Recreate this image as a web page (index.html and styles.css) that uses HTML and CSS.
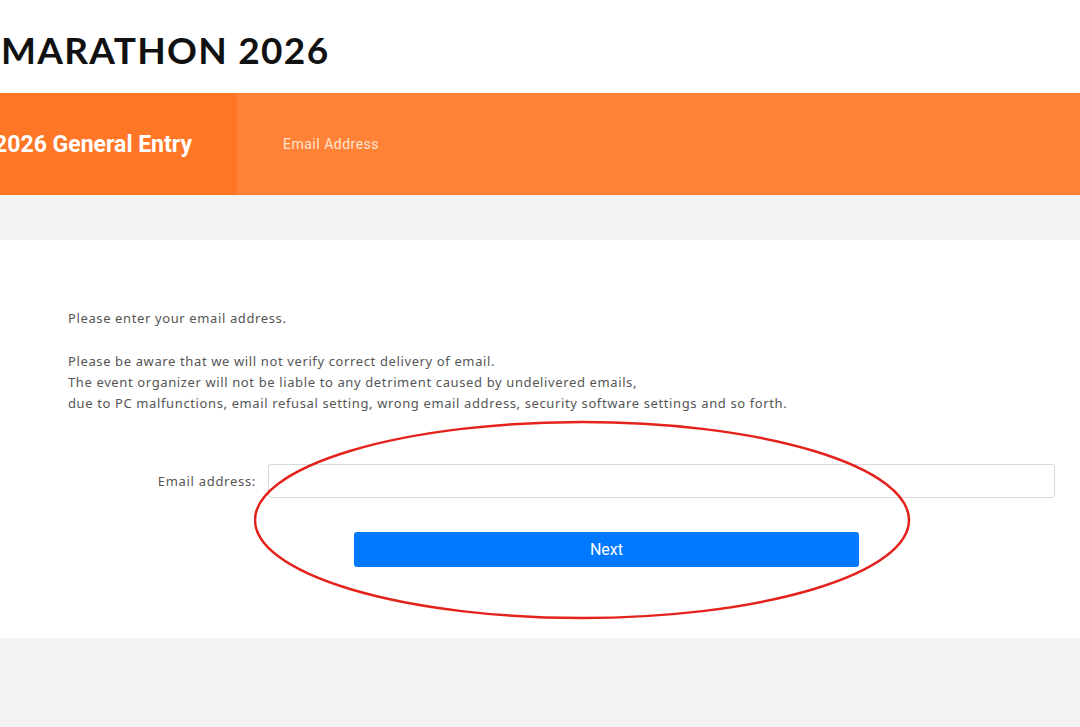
FILE: index.html
```html
<!DOCTYPE html>
<html lang="en">
<head>
<meta charset="utf-8">
<title>MARATHON 2026 - Email Address</title>
<link rel="stylesheet" href="styles.css">
</head>
<body>
<header class="site-header">
  <div class="logo">MARATHON 2026</div>
</header>
<nav class="entry-bar">
  <div class="entry-title">2026 General Entry</div>
  <div class="entry-step">Email Address</div>
</nav>
<div class="gap-band"></div>
<main class="content">
  <div class="notes">
    <p class="note">Please enter your email address.</p>
    <p class="note">Please be aware that we will not verify correct delivery of email.<br>The event organizer will not be liable to any detriment caused by undelivered emails,<br>due to PC malfunctions, email refusal setting, wrong email address, security software settings and so forth.</p>
  </div>
  <form class="form">
    <div class="form-row">
      <label class="form-label" for="email">Email address:</label>
      <input class="form-input" id="email" type="email">
    </div>
    <div class="btn-row">
      <button class="btn-next" type="button">Next</button>
    </div>
  </form>
  <svg class="annotation" width="680" height="210" viewBox="0 0 680 210">
    <ellipse cx="328" cy="100" rx="327" ry="98" fill="none" stroke="#e3231b" stroke-width="2.5"/>
  </svg>
</main>
<footer class="foot-band"></footer>
</body>
</html>
```
FILE: styles.css
```css
* { box-sizing: border-box; }
html, body { margin: 0; padding: 0; }
body {
  width: 1080px;
  height: 727px;
  overflow: hidden;
  background: #f3f3f3;
  font-family: "Noto Sans", "Noto Sans CJK JP", sans-serif;
}
.site-header {
  height: 93px;
  background: #fff;
  display: flex;
  align-items: center;
}
.logo {
  font-family: "Lato", "DejaVu Sans", sans-serif;
  font-weight: 700;
  font-size: 37px;
  letter-spacing: 1.3px;
  color: #111;
  margin-left: 1px;
  padding-top: 5px;
}
.entry-bar {
  height: 102px;
  display: flex;
  background: #ff8236;
}
.entry-title {
  width: 237px;
  flex-shrink: 0;
  background: #ff7626;
  color: #fff;
  font-family: "Roboto", "Liberation Sans", sans-serif;
  font-weight: 700;
  font-size: 23px;
  display: flex;
  align-items: center;
  justify-content: flex-end;
  padding-right: 45px;
  white-space: nowrap;
  overflow: hidden;
}
.entry-step {
  color: #ffe4d3;
  font-family: "Roboto", "Liberation Sans", sans-serif;
  font-size: 14px;
  letter-spacing: 0.5px;
  display: flex;
  align-items: center;
  padding-left: 46px;
}
.gap-band { height: 45px; }
.content {
  position: relative;
  background: #fff;
  height: 398px;
  padding-top: 68px;
}
.notes { padding-left: 68px; }
.note {
  margin: 0 0 22px;
  font-size: 13px;
  line-height: 21px;
  letter-spacing: 0.62px;
  color: #555;
}
.form { margin-top: 50px; }
.form-row {
  display: flex;
  align-items: center;
}
.form-label {
  width: 256px;
  flex-shrink: 0;
  text-align: right;
  font-size: 13px;
  letter-spacing: 0.7px;
  color: #555;
}
.form-input {
  margin-left: 12px;
  width: 787px;
  height: 34px;
  border: 1px solid #d9d9d9;
  border-radius: 3px;
  background: #fff;
}
.btn-row {
  margin-top: 34px;
  padding-left: 354px;
}
.btn-next {
  width: 505px;
  height: 35px;
  border: none;
  border-radius: 3px;
  background: #0079ff;
  color: #fff;
  font-family: "Roboto", "Liberation Sans", sans-serif;
  font-size: 16px;
}
.annotation {
  position: absolute;
  left: 254px;
  top: 180px;
}
.foot-band { height: 89px; }
```
